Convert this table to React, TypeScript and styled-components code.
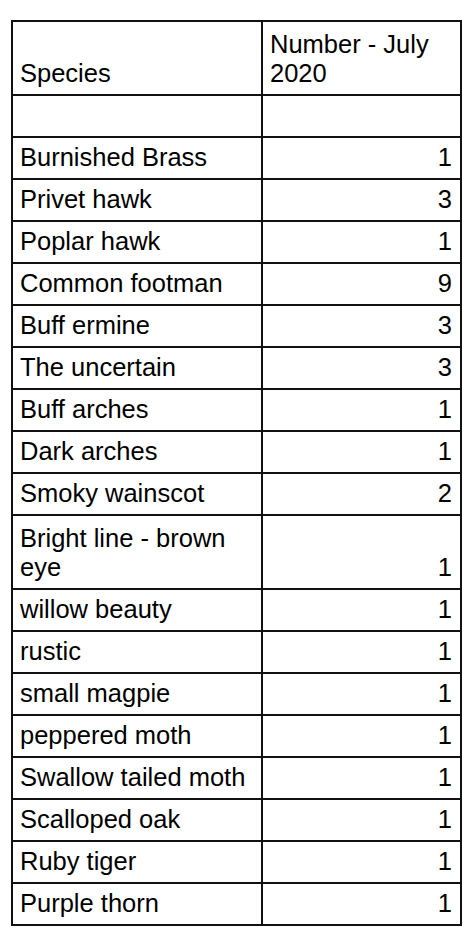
import React from "react";
import styled, { createGlobalStyle } from "styled-components";

const rows: [string, string][] = [
  ["Burnished Brass", "1"],
  ["Privet hawk", "3"],
  ["Poplar hawk", "1"],
  ["Common footman", "9"],
  ["Buff ermine", "3"],
  ["The uncertain", "3"],
  ["Buff arches", "1"],
  ["Dark arches", "1"],
  ["Smoky wainscot", "2"],
  ["Bright line - brown eye", "1"],
  ["willow beauty", "1"],
  ["rustic", "1"],
  ["small magpie", "1"],
  ["peppered moth", "1"],
  ["Swallow tailed moth", "1"],
  ["Scalloped oak", "1"],
  ["Ruby tiger", "1"],
  ["Purple thorn", "1"],
];

const GlobalStyle = createGlobalStyle`
  html, body {
    margin: 0;
    padding: 0;
    background: #fff;
  }
`;

const Page = styled.div`
  padding: 20px 0 0 11px;
`;

const Table = styled.table`
  width: 451px;
  border-collapse: collapse;
  table-layout: fixed;
  font-family: "Liberation Sans", Arial, sans-serif;
  font-size: 25.5px;
  line-height: 29px;
  color: #000;
`;

const Cell = styled.td<{ $num?: boolean; $tall?: boolean }>`
  border: 2px solid #111;
  padding: ${(p) => (p.$tall ? "8px" : "5px")} 8px 6px 7px;
  vertical-align: bottom;
  text-align: ${(p) => (p.$num ? "right" : "left")};
`;

export default function App() {
  return (
    <>
      <GlobalStyle />
      <Page>
        <Table>
          <colgroup>
            <col style={{ width: 250 }} />
            <col />
          </colgroup>
          <tbody>
            <tr>
              <Cell $tall>Species</Cell>
              <Cell $tall>Number - July 2020</Cell>
            </tr>
            <tr>
              <Cell>&nbsp;</Cell>
              <Cell>&nbsp;</Cell>
            </tr>
            {rows.map(([name, count]) => {
              const tall = name.length > 20;
              return (
                <tr key={name}>
                  <Cell $tall={tall}>{name}</Cell>
                  <Cell $tall={tall} $num>
                    {count}
                  </Cell>
                </tr>
              );
            })}
          </tbody>
        </Table>
      </Page>
    </>
  );
}
